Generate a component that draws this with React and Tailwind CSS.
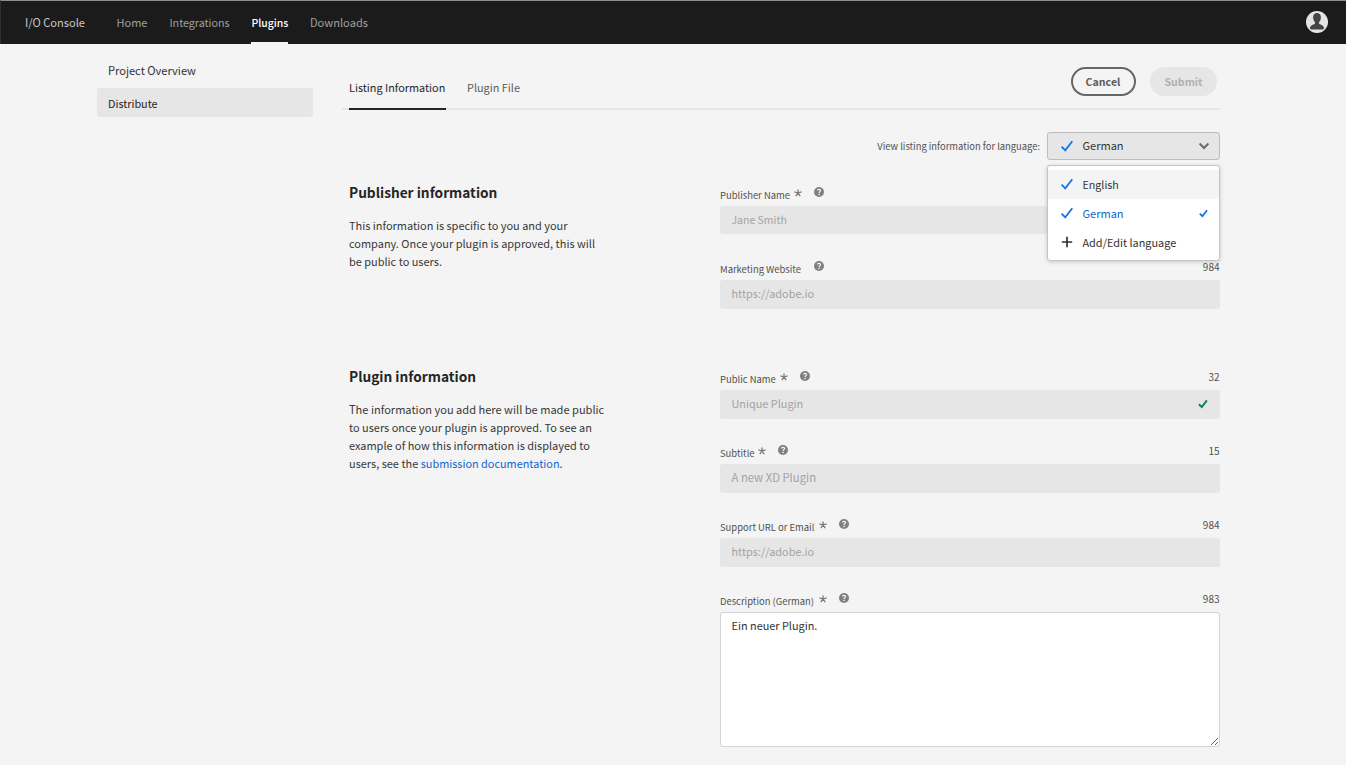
const BLUE = "#1473e6";

function Check({ className }) {
  return (
    <svg viewBox="0 0 12 12" className={className} fill="none" stroke={BLUE} strokeWidth="1.8">
      <path d="M0.6 6.6 L4.2 10.3 L11.3 1.2" />
    </svg>
  );
}

function BoldCheck({ color, className }) {
  return (
    <svg viewBox="0 0 10 10" className={className} fill="none" stroke={color} strokeWidth="2">
      <path d="M0.9 5.2 L3.8 8 L8.9 1.4" />
    </svg>
  );
}

function Asterisk() {
  return (
    <svg viewBox="0 0 8 8" className="size-2" stroke="#777" strokeWidth="1.3" fill="none">
      <path d="M4 4V0.4M4 4L7.6 2.9M4 4L6.2 7.2M4 4L1.8 7.2M4 4L0.4 2.9" />
    </svg>
  );
}

function Help() {
  return (
    <svg viewBox="0 0 10 10" className="size-[10px]" fill="none">
      <circle cx="5" cy="5" r="5" fill="#808080" />
      <path d="M3.4 3.4C3.7 2.6 4.4 2.3 5.1 2.3C6 2.3 6.6 2.9 6.6 3.6C6.6 4.6 5.1 4.7 5.1 5.9" stroke="#f4f4f4" strokeWidth="1.2" />
      <rect x="4.4" y="6.8" width="1.4" height="1.3" fill="#f4f4f4" />
    </svg>
  );
}

function Field({ label, labelWidth, required, count, height = "h-[29px]", children }) {
  return (
    <div className="flex flex-col">
      <div className="flex h-[21px] items-start">
        <span className={"mt-1 text-[9.43px] leading-3 whitespace-nowrap text-[#505050] " + labelWidth}>{label}</span>
        {required && (
          <span className="mt-[4px] ml-1">
            <Asterisk />
          </span>
        )}
        <span className={required ? "mt-[2px] ml-3" : "mt-[2px] ml-[13px]"}>
          <Help />
        </span>
        <span className="mt-[2px] mr-[0.5px] ml-auto text-[10px] leading-3 text-[#505050]">{count}</span>
      </div>
      <div className={height}>{children}</div>
    </div>
  );
}

function Input({ children, valid, size = "text-[10.9px] pb-[3px]" }) {
  return (
    <div className="flex h-full items-center justify-between rounded-[3px] bg-[#e6e6e6] pr-[12px] pl-[11.5px] leading-4 text-[#a3a3a3]">
      <span className={size}>{children}</span>
      {valid && <BoldCheck color="#12805c" className="mb-px size-[10px]" />}
    </div>
  );
}

function Header() {
  const link = "flex h-full items-center text-[#a0a0a0]";
  return (
    <header className="flex h-[44px] items-stretch border-t border-l border-t-[#8e8e8e] border-l-[#303030] bg-[#1b1b1b] pr-[18px] pl-[24px] leading-4">
      <span className="flex items-center pb-[2px] text-[11.1px] text-[#c8c8c8]">I/O Console</span>
      <nav className="ml-[31.5px] flex">
        <a className={link + " w-[53px] pb-[2px] text-[11px]"}>Home</a>
        <a className={link + " w-[82px] text-[10.7px]"}>Integrations</a>
        <a className="relative mr-[21.5px] flex w-[37px] items-center text-[10.4px] font-medium text-white">
          <span className="pt-px">Plugins</span>
          <span className="absolute inset-x-0 bottom-0 h-[2px] bg-[#f4f4f4]" />
        </a>
        <a className={link + " pb-[2px] text-[11.1px]"}>Downloads</a>
      </nav>
      <svg viewBox="0 0 22 22" className="mt-[10px] ml-auto size-[22px]">
        <circle cx="11" cy="11" r="11" fill="#e4e4e4" />
        <path
          d="M11 2C8.6 2 7.1 3.8 7.1 6.2C7.1 8.5 8 10.1 8.9 11.1V12.8C8.6 13.4 4 14.1 4 17C4 18.2 5 18.6 6 18.6H16C17 18.6 18 18.2 18 17C18 14.1 13.4 13.4 13.1 12.8V11.1C14 10.1 14.9 8.5 14.9 6.2C14.9 3.8 13.4 2 11 2Z"
          fill="#444"
        />
      </svg>
    </header>
  );
}

function LanguagePicker() {
  const row = "flex h-[29px] items-center pl-[13px]";
  return (
    <div className="relative w-[173px]">
      <div className="flex h-[28px] items-center rounded-[3px] border border-[#bcbcbc] bg-[#e6e6e6] pr-[9px] pl-[13px] text-[11px] leading-4 text-[#323232]">
        <Check className="size-3" />
        <span className="ml-[9.5px] pb-[2px]">German</span>
        <svg viewBox="0 0 12 8" className="ml-auto h-2 w-3" fill="none" stroke="#6a6a6a" strokeWidth="2">
          <path d="M1.6 1.5L6 6L10.4 1.5" />
        </svg>
      </div>
      <div className="absolute top-[33px] left-0 z-10 w-[173px] rounded-[3px] border border-[#c4c4c4] bg-white pt-1 pb-[3px] text-[11px] leading-4 text-[#323232] shadow-[0_1px_4px_rgba(0,0,0,0.18)]">
        <div className={row + " bg-[#f4f4f4]"}>
          <Check className="mb-px size-3" />
          <span className="ml-[9.5px] text-[10.7px]">English</span>
        </div>
        <div className={row + " text-[#0d66d0]"}>
          <Check className="mb-px size-3" />
          <span className="ml-[9.5px] pb-[2px]">German</span>
          <BoldCheck color={BLUE} className="mr-[11px] ml-auto size-[9px]" />
        </div>
        <div className={row}>
          <svg viewBox="0 0 12 12" className="mb-px size-3" stroke="#323232" strokeWidth="1.7">
            <path d="M6 0.8V11.2M0.8 6H11.2" />
          </svg>
          <span className="ml-[9.5px] pb-[2px] text-[10.9px]">Add/Edit language</span>
        </div>
      </div>
    </div>
  );
}

function Section({ title, text, children }) {
  return (
    <section className="flex pl-[7px]">
      <div className="-mt-[3px] w-[371px]">
        <h2 className="text-[13.7px] leading-5 font-bold text-[#252525]">{title}</h2>
        <p className="mt-[14px] text-[10.96px] leading-[18px] whitespace-nowrap text-[#383838]">{text}</p>
      </div>
      <div className="flex flex-1 flex-col gap-6">{children}</div>
    </section>
  );
}

export default function App() {
  return (
    <div className="h-[765px] w-[1346px] overflow-hidden bg-[#f4f4f4] font-['Noto_Sans_CJK_SC','Noto_Sans',sans-serif]">
      <Header />
      <div className="flex">
        <aside className="ml-[97px] w-[216px] pt-[12px] text-[#323232]">
          <div className="flex h-[29px] items-center pb-[2px] pl-[11px] text-[11.1px] leading-4">Project Overview</div>
          <div className="mt-[3px] flex h-[29px] items-center rounded-[3px] bg-[#e6e6e6] pl-[11px] text-[10.8px] leading-4 text-[#252525]">
            Distribute
          </div>
        </aside>
        <main className="ml-[29px] w-[878px]">
          <div className="flex h-[66px] items-stretch border-b-2 border-[#e6e6e6] pl-[7px] text-[10.9px] leading-4">
            <div className="relative flex w-[97px] items-end pb-[13px] text-[10.87px] text-[#252525]">
              Listing Information
              <span className="absolute inset-x-0 -bottom-[2px] h-[2px] bg-[#252525]" />
            </div>
            <div className="ml-[21px] flex items-end pb-[13px] text-[#5c5c5c]">Plugin File</div>
            <div className="mt-[23px] mr-[3px] ml-auto flex h-[29px] gap-[14px] text-[10.6px] font-bold">
              <button className="w-[65px] rounded-full border-2 border-[#666] pr-px text-[#5c5c5c]">Cancel</button>
              <button className="w-[67px] rounded-full bg-[#e6e6e6] text-[#b0b0b0]">Submit</button>
            </div>
          </div>
          <div className="mt-[22px] flex items-center justify-end gap-[7px]">
            <span className="text-[9.39px] leading-4 text-[#505050]">View listing information for language:</span>
            <LanguagePicker />
          </div>
          <div className="mt-[25px] flex flex-col gap-[60px]">
            <Section
              title="Publisher information"
              text={
                <>
                  This information is specific to you and your
                  <br />
                  company. Once your plugin is approved, this will
                  <br />
                  be public to users.
                </>
              }
            >
              <Field label="Publisher Name" labelWidth="w-[70px]" required height="mb-px h-[28px]">
                <Input size="text-[10.5px] pb-px">Jane Smith</Input>
              </Field>
              <Field label="Marketing Website" labelWidth="w-[81px]" count="984">
                <Input>https://adobe.io</Input>
              </Field>
            </Section>
            <Section
              title="Plugin information"
              text={
                <>
                  <span className="text-[11.05px]">The information you add here will be made public</span>
                  <br />
                  to users once your plugin is approved. To see an
                  <br />
                  example of how this information is displayed to
                  <br />
                  users, see the <a className="text-[10.9px] text-[#0d66d0]">submission documentation</a>.
                </>
              }
            >
              <Field label="Public Name" labelWidth="w-[56px]" required count="32">
                <Input valid>Unique Plugin</Input>
              </Field>
              <Field label="Subtitle" labelWidth="w-[34px]" required count="15">
                <Input size="text-[11.3px] pb-[3px]">A new XD Plugin</Input>
              </Field>
              <Field label="Support URL or Email" labelWidth="w-[95px]" required count="984">
                <Input>https://adobe.io</Input>
              </Field>
              <Field label="Description (German)" labelWidth="w-[95px]" required count="983" height="h-[135px]">
                <textarea
                  defaultValue="Ein neuer Plugin."
                  className="block h-[135px] w-[500px] resize rounded-[3px] border border-[#d3d3d3] bg-white px-[10.5px] py-[3px] text-[10.9px] leading-[18px] text-[#323232]"
                />
              </Field>
            </Section>
          </div>
        </main>
      </div>
    </div>
  );
}
